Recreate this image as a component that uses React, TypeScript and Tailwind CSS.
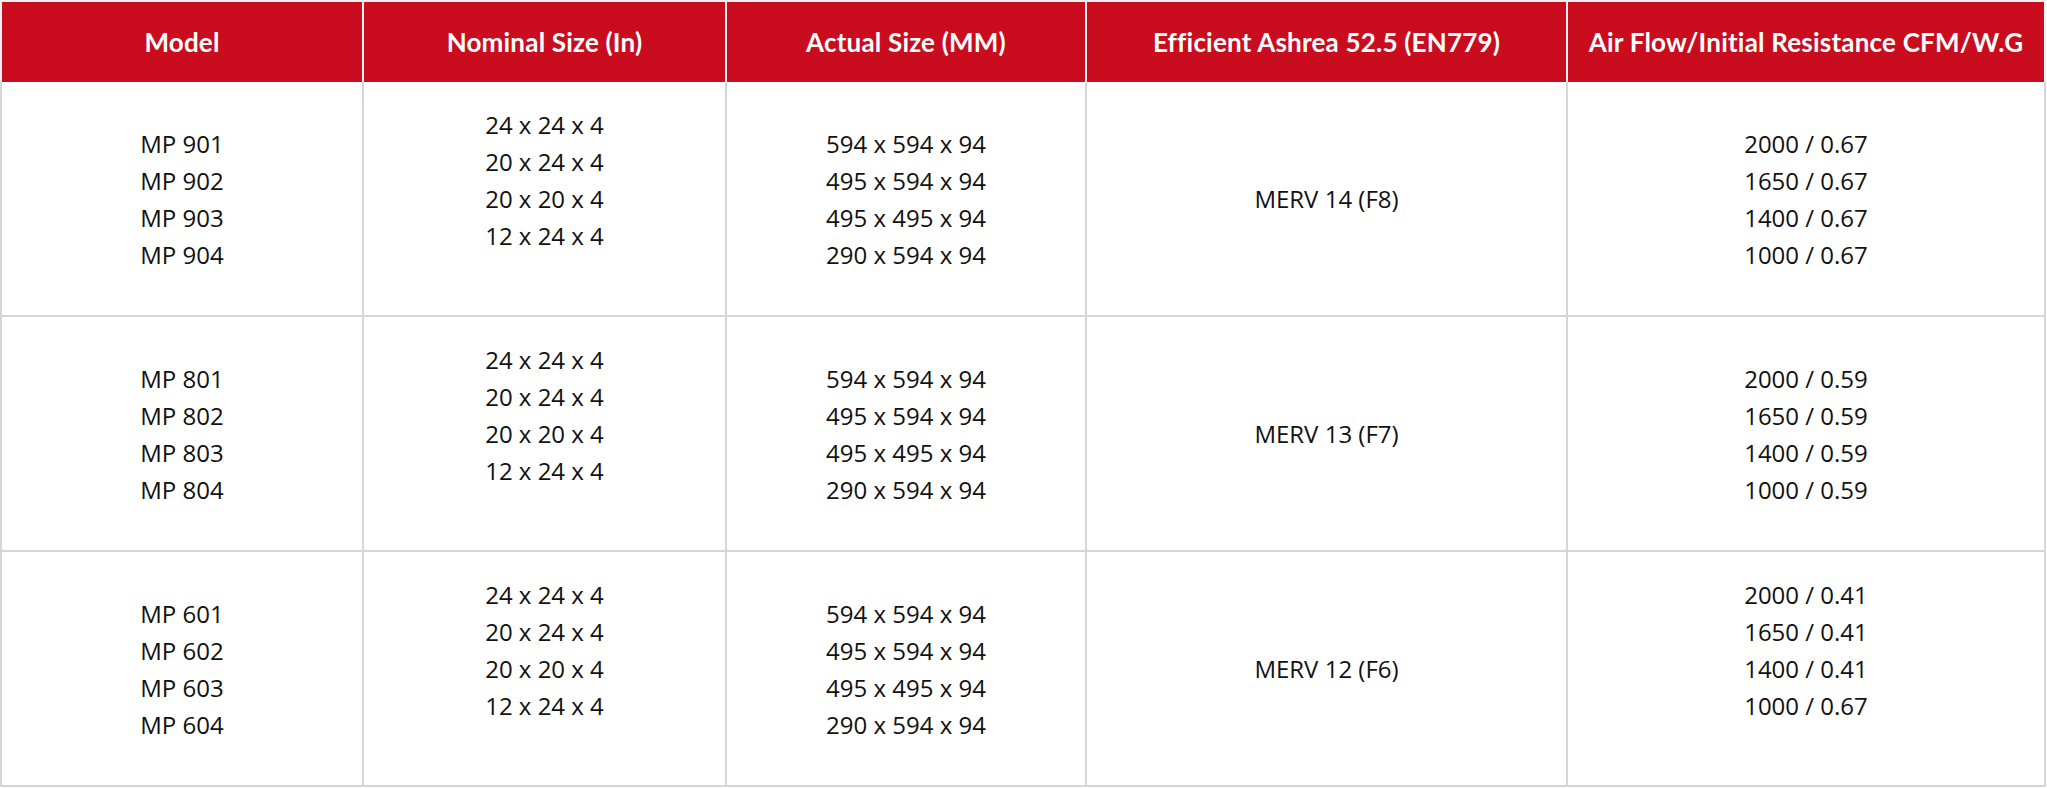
import React from "react";

const RED = "bg-[#c90d1f]";

type Cell = { lines: string[]; shift?: boolean };
type Row = Cell[];

const nominal = ["24 x 24 x 4", "20 x 24 x 4", "20 x 20 x 4", "12 x 24 x 4"];
const actual = ["594 x 594 x 94", "495 x 594 x 94", "495 x 495 x 94", "290 x 594 x 94"];

const rows: Row[] = [
  [
    { lines: ["MP 901", "MP 902", "MP 903", "MP 904"] },
    { lines: nominal, shift: true },
    { lines: actual },
    { lines: ["MERV 14 (F8)"] },
    { lines: ["2000 / 0.67", "1650 / 0.67", "1400 / 0.67", "1000 / 0.67"] },
  ],
  [
    { lines: ["MP 801", "MP 802", "MP 803", "MP 804"] },
    { lines: nominal, shift: true },
    { lines: actual },
    { lines: ["MERV 13 (F7)"] },
    { lines: ["2000 / 0.59", "1650 / 0.59", "1400 / 0.59", "1000 / 0.59"] },
  ],
  [
    { lines: ["MP 601", "MP 602", "MP 603", "MP 604"] },
    { lines: nominal, shift: true },
    { lines: actual },
    { lines: ["MERV 12 (F6)"] },
    { lines: ["2000 / 0.41", "1650 / 0.41", "1400 / 0.41", "1000 / 0.67"], shift: true },
  ],
];

const headers = [
  "Model",
  "Nominal Size (In)",
  "Actual Size (MM)",
  "Efficient Ashrea 52.5 (EN779)",
  "Air Flow/Initial Resistance CFM/W.G",
];

const widths = ["w-[364px] border-l-2", "w-[363px]", "w-[360px]", "w-[481px]", "w-[478px]"];

export default function App() {
  return (
    <div className="w-[2047px] h-[789px] bg-white">
      <div className="w-[2046px]">
        <div className="flex h-[82px]">
          {headers.map((h, i) => (
            <div
              key={h}
              className={`${widths[i]} ${RED} border-t-2 border-r-2 border-[#f2f2f2] flex items-center justify-center text-white text-[26px] font-bold tracking-[0.2px]`}
              style={{ fontFamily: "Lato, 'Open Sans', sans-serif" }}
            >
              {h}
            </div>
          ))}
        </div>
        {rows.map((row, r) => (
          <div key={r} className="flex h-[235px]">
            {row.map((cell, i) => (
              <div
                key={i}
                className={`${widths[i]} border-r-2 border-b-2 border-[#d6d6d6] flex items-center justify-center text-[24px] leading-[37px] text-[#111111]`}
                style={{ fontFamily: "'Open Sans', 'Noto Sans', sans-serif" }}
              >
                <div className={`flex flex-col items-center ${cell.shift ? "pb-[37px]" : ""}`}>
                  {cell.lines.map((l) => (
                    <span key={l}>{l}</span>
                  ))}
                </div>
              </div>
            ))}
          </div>
        ))}
      </div>
    </div>
  );
}
